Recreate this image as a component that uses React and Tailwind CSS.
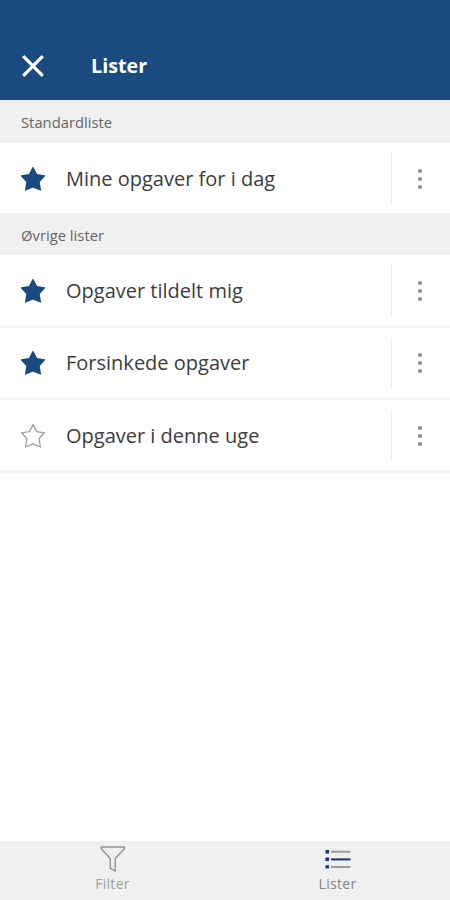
const StarIcon = ({ filled }) => (
  <svg viewBox="0 0 26 26" className="h-[26px] w-[26px] shrink-0">
    <path
      d="M13 1.6 L16.6 8.6 L24.5 9.8 L19 15.7 L20.4 24 L13 20.9 L5.6 24 L7 15.7 L1.5 9.8 L9.4 8.6 Z"
      fill={filled ? "#1a4a80" : "none"}
      stroke={filled ? "#1a4a80" : "#a0a0a0"}
      strokeWidth="1.3"
      strokeLinejoin="round"
    />
  </svg>
);

const MoreIcon = () => (
  <svg viewBox="0 0 6 22" className="mr-[3px] h-[22px] w-[6px]" fill="#8c8c8c">
    <circle cx="3" cy="3" r="2.1" />
    <circle cx="3" cy="11" r="2.1" />
    <circle cx="3" cy="19" r="2.1" />
  </svg>
);

const SectionTitle = ({ children, className }) => (
  <h2 className={`flex items-center bg-[#f0f0f0] pl-[21px] text-[14.8px] text-[#666] ${className}`}>
    {children}
  </h2>
);

const ListRow = ({ label, filled, className }) => (
  <li className={`flex items-center bg-white pt-px pl-5 ${className}`}>
    <StarIcon filled={filled} />
    <span className="ml-5 flex-1 text-[20px] leading-7 text-[#3c3c3c]">{label}</span>
    <button className="flex h-[51px] w-[59px] items-center justify-center border-l border-[#ececec]">
      <MoreIcon />
    </button>
  </li>
);

const Header = () => (
  <header className="flex h-[100px] items-end bg-[#1a4a80] pb-[21px] pl-[22px] text-white">
    <button className="flex h-[26px] items-center">
      <svg viewBox="0 0 22 22" className="h-[22px] w-[22px]" stroke="currentColor" strokeWidth="3.2">
        <path d="M1.2 1.2 L20.8 20.8 M20.8 1.2 L1.2 20.8" />
      </svg>
    </button>
    <h1 className="ml-[47px] text-[19.75px] leading-[26px] font-bold">Lister</h1>
  </header>
);

const TabBar = () => (
  <nav className="flex h-[59px] bg-[#f0f0f0] text-[14px] leading-5">
    <button className="flex flex-1 flex-col items-center pt-1 text-[#a0a0a0]">
      <svg viewBox="0 0 28 28" className="h-7 w-7" fill="none" stroke="#929292" strokeWidth="1.4" strokeLinejoin="round">
        <path d="M2.2 2 H25.4 V3.8 L16.3 13.4 V26.2 L11.3 23.2 V13.4 L2.2 3.8 Z" />
      </svg>
      <span className="mt-px tracking-[0.3px]">Filter</span>
    </button>
    <button className="flex flex-1 flex-col items-center pt-1 text-[#858585]">
      <svg viewBox="0 0 28 28" className="h-7 w-7">
        <path d="M1.5 5 H5 V8.4 H1.5 Z M1.5 12.6 H5 V16 H1.5 Z M1.5 20.2 H5 V23.6 H1.5 Z" fill="#1b2e78" />
        <path d="M7 6.8 H26.5 M7 22 H26.5" stroke="#999ba5" strokeWidth="2" />
        <path d="M7 14.4 H26.5" stroke="#1b2e88" strokeWidth="2" />
      </svg>
      <span className="mt-px tracking-[0.3px]">Lister</span>
    </button>
  </nav>
);

const App = () => {
  return (
    <div className="flex h-screen w-full flex-col bg-white font-['Open_Sans',sans-serif]">
      <Header />
      <main className="flex-1">
        <SectionTitle className="h-[43px] pt-px">Standardliste</SectionTitle>
        <ul>
          <ListRow label="Mine opgaver for i dag" filled className="h-[70px]" />
        </ul>
        <SectionTitle className="h-[42px] pt-0.5">Øvrige lister</SectionTitle>
        <ul>
          <ListRow label="Opgaver tildelt mig" filled className="h-[73px] border-b-[3px] border-[#f4f4f4]" />
          <ListRow label="Forsinkede opgaver" filled className="h-[72px] border-b-[3px] border-[#f4f4f4]" />
          <ListRow label="Opgaver i denne uge" className="h-[73px] border-b-[3px] border-[#f4f4f4]" />
        </ul>
      </main>
      <TabBar />
    </div>
  );
};

export default App;
